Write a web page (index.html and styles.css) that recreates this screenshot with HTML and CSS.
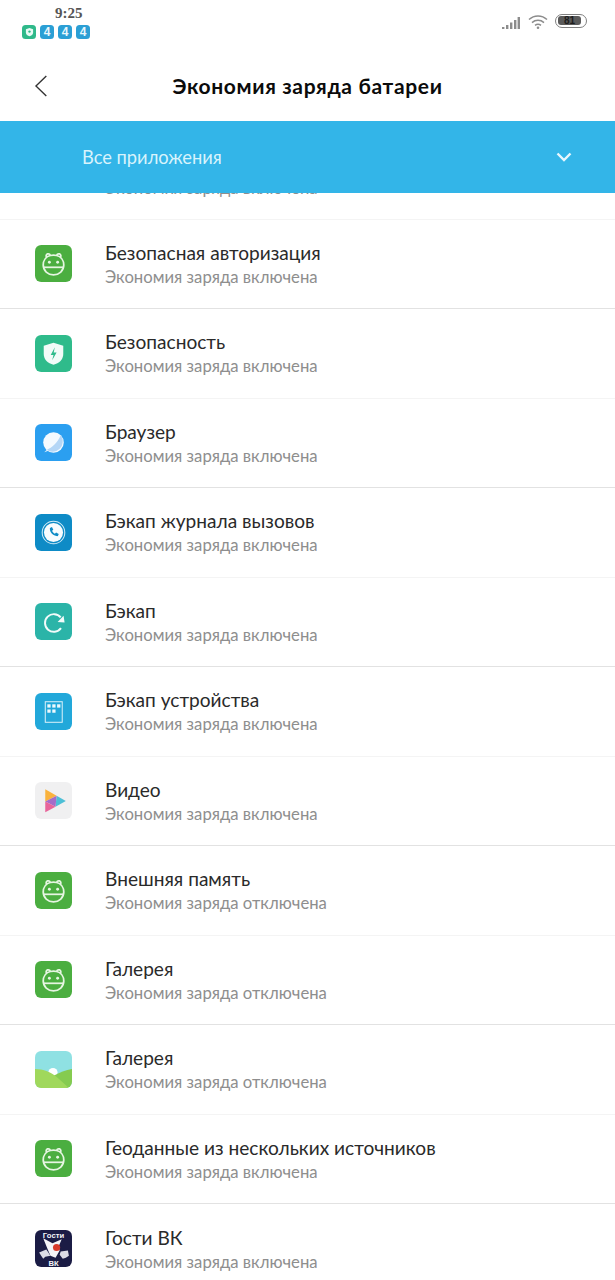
FILE: index.html
```html
<!DOCTYPE html>
<html lang="ru">
<head>
<meta charset="utf-8">
<title>Экономия заряда батареи</title>
<link rel="stylesheet" href="styles.css">
</head>
<body>
<svg class="defs" width="0" height="0" aria-hidden="true">
  <defs>
    <symbol id="android" viewBox="0 0 36 36">
      <rect width="36" height="36" rx="6" fill="#4bae40"/>
      <g fill="none" stroke="#e6f5e2" stroke-width="1.700">
        <path d="M11.500 12.500c-.9-1.200-1-3.200.7-3.800 1.200-.4 2.300.2 2.800 1.500M24.500 12.500c.9-1.200 1-3.200-.7-3.800-1.200-.4-2.300.2-2.800 1.500"/>
        <path d="M15 10.200c2-.5 4-.5 6 0 4.300 1 7 4.800 7 9.300 0 5.500-4.500 9.500-10 9.500S8 25 8 19.500c0-4.500 2.700-8.300 7-9.300z"/>
        <path d="M8.200 21.700h19.600"/>
      </g>
      <circle cx="14" cy="16.800" r="1.400" fill="#e6f5e2"/>
      <circle cx="22" cy="16.800" r="1.400" fill="#e6f5e2"/>
    </symbol>
    <symbol id="shield" viewBox="0 0 36 36">
      <rect width="36" height="36" rx="6" fill="#2fbb8b"/>
      <path d="M18 7.500l9.500 3v8c0 5.500-4 9-9.500 10.500C12.500 27.500 8.500 24 8.500 18.500v-8z" fill="#f2fbf8"/>
      <path d="M19.300 12l-4 7.500h2.700l-1.300 5 4.300-7.500h-2.800z" fill="#2fbb8b"/>
    </symbol>
    <symbol id="browser" viewBox="0 0 36 36">
      <rect width="36" height="36" rx="6" fill="#2b9ff0"/>
      <circle cx="18" cy="18" r="10" fill="#f4faff"/>
      <path d="M25 11a10 10 0 0 1-14 14c5-1 11-7 14-14z" fill="#b4d6f6"/>
      <path d="M9 27.500l3-3 1 1.500z" fill="#e4f2fd"/>
    </symbol>
    <symbol id="calls" viewBox="0 0 36 36">
      <rect width="36" height="36" rx="6" fill="#0e8bc6"/>
      <circle cx="18" cy="18" r="11" fill="none" stroke="#d5edf8" stroke-width="1"/>
      <circle cx="18" cy="18" r="9.300" fill="#f8fcfe"/>
      <path d="M14.500 13.500l2-.8 1.300 2.700-1.200 1c.6 1.400 1.500 2.300 2.800 2.900l1.100-1.200 2.600 1.400-.8 2c-4.500.4-8.300-3.500-7.800-8z" fill="#0e8bc6"/>
    </symbol>
    <symbol id="backup" viewBox="0 0 36 36">
      <rect width="36" height="36" rx="6" fill="#2bb4a8"/>
      <path d="M25.300 24.500A8.600 8.600 0 1 1 25 14" fill="none" stroke="#f2fbfa" stroke-width="1.900"/>
      <path d="M22 18.500l6.800.5-1-6.500z" fill="#f2fbfa"/>
    </symbol>
    <symbol id="device" viewBox="0 0 36 36">
      <rect width="36" height="36" rx="6" fill="#22a8da"/>
      <rect x="10" y="8.500" width="16.500" height="20" fill="none" stroke="#d8f0f9" stroke-width="1"/>
      <g fill="#eef9fd">
        <rect x="12" y="11" width="3.200" height="3.200"/>
        <rect x="16.800" y="11" width="3.200" height="3.200"/>
        <rect x="21.500" y="11" width="3.200" height="3.200"/>
        <rect x="12" y="16" width="3.200" height="3.200"/>
        <rect x="16.800" y="16" width="3.200" height="3.200"/>
      </g>
    </symbol>
    <symbol id="video" viewBox="0 0 36 36">
      <rect width="36" height="36" rx="6" fill="#f0f0f1"/>
      <path d="M10 7l11 6.300L10 19z" fill="#f9b23d"/>
      <path d="M21 13.300l9 5.200-10 5.500z" fill="#4dbfd6"/>
      <path d="M10 19l11-5.700-1 10.700z" fill="#a56cc8"/>
      <path d="M10 19l10 5-10 5.500z" fill="#e8649a"/>
    </symbol>
    <symbol id="gallery" viewBox="0 0 36 36">
      <clipPath id="gallery-clip"><rect width="36" height="36" rx="6"/></clipPath>
      <g clip-path="url(#gallery-clip)">
        <rect width="36" height="36" fill="#8fe1e3"/>
        <circle cx="17.500" cy="21" r="4.500" fill="#fff"/>
        <path d="M36 17.500c-6 1-12 3.500-18 6.500l10 12h8z" fill="#85cb50"/>
        <path d="M0 17.500c8 0 16 3 22 8.500l11 10H0z" fill="#a0d85c"/>
      </g>
    </symbol>
    <symbol id="vk" viewBox="0 0 36 36">
      <rect width="36" height="36" rx="6" fill="#1b1c45"/>
      <text x="18" y="7.500" class="vk-label">Гости</text>
      <text x="18" y="35" class="vk-label">ВК</text>
      <path d="M8 8l9 5 9-4-3 7 1 4-4 7-5-2-3-7z" fill="#f4f4f8"/>
      <path d="M4 22l7-3 2 3 2 3-5 1-2 2-2-3zM32 20l-7 1-1 3 3 4 3-1 3-2z" fill="#dcdce6"/>
      <circle cx="21" cy="17" r="3.500" fill="#d8392a"/>
    </symbol>
  </defs>
</svg>

<div class="phone">
  <header class="status">
    <div class="status-left">
      <div class="clock">9:25</div>
      <div class="chips">
        <span class="chip chip-green"><svg class="chip-shield" viewBox="0 0 10 10"><path d="M5 .5l4 1.500v3.500C9 8 7 9 5 9.800 3 9 1 8 1 5.500V2z" fill="#e8faf4"/><circle cx="5" cy="4.500" r="1.300" fill="#2fb98a"/></svg></span>
        <span class="chip chip-blue">4</span>
        <span class="chip chip-blue">4</span>
        <span class="chip chip-blue">4</span>
      </div>
    </div>
    <div class="status-right">
      <svg class="signal" viewBox="0 0 18 12"><g fill="#8c8c8c"><rect x="0" y="10" width="2.400" height="2"/><rect x="4" y="8" width="2.400" height="4"/><rect x="8" y="5.500" width="2.400" height="6.500"/><rect x="12" y="3" width="2.400" height="9"/><rect x="15.600" y="0" width="2.400" height="12"/></g></svg>
      <svg class="wifi" viewBox="0 0 20 15"><g fill="none" stroke="#8c8c8c" stroke-width="1.500"><path d="M1 5.500c5-4.800 13-4.800 18 0"/><path d="M4 8.600c3.400-3 8.600-3 12 0"/><path d="M7 11.300c1.800-1.300 4.200-1.300 6 0"/></g><circle cx="10" cy="13.700" r="1.300" fill="#8c8c8c"/></svg>
      <div class="battery"><span class="battery-fill">81</span></div>
    </div>
  </header>

  <nav class="titlebar">
    <svg class="back" viewBox="0 0 14 24"><path d="M12.800 1L1.500 12l11.300 11" fill="none" stroke="#333" stroke-width="1.500"/></svg>
    <h1 class="title">Экономия заряда батареи</h1>
  </nav>

  <div class="filter">
    <span class="filter-label">Все приложения</span>
    <svg class="filter-chevron" viewBox="0 0 16 10"><path d="M1.500 1.500L8 8l6.500-6.500" fill="none" stroke="#e8f7fd" stroke-width="2.400"/></svg>
  </div>

  <main class="list">
    <div class="row row-clipped row-faint"><span class="sub">Экономия заряда включена</span></div>
    <div class="row"><svg class="icon"><use href="#android"/></svg><div class="texts"><span class="name">Безопасная авторизация</span><span class="sub">Экономия заряда включена</span></div></div>
    <div class="row row-faint"><svg class="icon"><use href="#shield"/></svg><div class="texts"><span class="name">Безопасность</span><span class="sub">Экономия заряда включена</span></div></div>
    <div class="row"><svg class="icon"><use href="#browser"/></svg><div class="texts"><span class="name">Браузер</span><span class="sub">Экономия заряда включена</span></div></div>
    <div class="row row-faint"><svg class="icon"><use href="#calls"/></svg><div class="texts"><span class="name">Бэкап журнала вызовов</span><span class="sub">Экономия заряда включена</span></div></div>
    <div class="row"><svg class="icon"><use href="#backup"/></svg><div class="texts"><span class="name">Бэкап</span><span class="sub">Экономия заряда включена</span></div></div>
    <div class="row row-faint"><svg class="icon"><use href="#device"/></svg><div class="texts"><span class="name">Бэкап устройства</span><span class="sub">Экономия заряда включена</span></div></div>
    <div class="row"><svg class="icon"><use href="#video"/></svg><div class="texts"><span class="name">Видео</span><span class="sub">Экономия заряда включена</span></div></div>
    <div class="row row-faint"><svg class="icon"><use href="#android"/></svg><div class="texts"><span class="name">Внешняя память</span><span class="sub">Экономия заряда отключена</span></div></div>
    <div class="row"><svg class="icon"><use href="#android"/></svg><div class="texts"><span class="name">Галерея</span><span class="sub">Экономия заряда отключена</span></div></div>
    <div class="row row-faint"><svg class="icon"><use href="#gallery"/></svg><div class="texts"><span class="name">Галерея</span><span class="sub">Экономия заряда отключена</span></div></div>
    <div class="row"><svg class="icon"><use href="#android"/></svg><div class="texts"><span class="name">Геоданные из нескольких источников</span><span class="sub">Экономия заряда включена</span></div></div>
    <div class="row row-last"><svg class="icon"><use href="#vk"/></svg><div class="texts"><span class="name">Гости ВК</span><span class="sub">Экономия заряда включена</span></div></div>
  </main>
</div>
</body>
</html>
```
FILE: styles.css
```css
* { box-sizing: border-box; }

html, body {
  margin: 0;
  padding: 0;
  background: #fff;
}

body {
  font-family: "Lato", "Noto Sans", sans-serif;
  overflow: hidden;
}

.defs { position: absolute; }

.vk-label {
  font-family: "Liberation Sans", sans-serif;
  font-size: 7.5px;
  font-weight: 700;
  fill: #f4f4f8;
  text-anchor: middle;
}

.phone {
  width: 615px;
  height: 1280px;
  display: flex;
  flex-direction: column;
  overflow: hidden;
}

/* status bar */
.status {
  height: 50px;
  flex: none;
  display: flex;
  justify-content: space-between;
  padding: 6px 28px 0 22px;
}

.status-left {
  display: flex;
  flex-direction: column;
  align-items: flex-start;
}

.clock {
  margin-left: 33px;
  font-family: "Liberation Serif", serif;
  font-size: 15px;
  line-height: 15px;
  font-weight: 700;
  color: #555;
}

.chips {
  margin-top: 4px;
  display: flex;
  gap: 4px;
}

.chip {
  width: 14px;
  height: 14px;
  border-radius: 3.500px;
  display: flex;
  align-items: center;
  justify-content: center;
  font-family: "Liberation Sans", sans-serif;
  font-size: 12px;
  font-weight: 700;
  color: #e9f7fc;
}

.chip-green { background: #2fb98a; }
.chip-blue { background: #2b9fd5; }
.chip-shield { width: 9px; height: 10px; }

.status-right {
  display: flex;
  align-items: flex-start;
  padding-top: 8px;
}

.signal { width: 18px; height: 12px; margin: 3px 8px 0 0; }
.wifi { width: 20px; height: 15px; margin-right: 7px; }

.battery {
  width: 32px;
  height: 14px;
  border: 1.500px solid #808080;
  border-radius: 7px;
  padding: 1px 2px;
  display: flex;
}

.battery-fill {
  width: 23px;
  height: 9px;
  border-radius: 3px;
  background: #5a5a5a;
  color: #1d1d1d;
  font-family: "Liberation Sans", sans-serif;
  font-size: 10px;
  line-height: 9px;
  font-weight: 700;
  text-align: center;
}

/* title */
.titlebar {
  height: 71px;
  flex: none;
  padding-bottom: 1px;
  display: flex;
  align-items: center;
  justify-content: center;
  position: relative;
}

.back {
  position: absolute;
  left: 34px;
  top: 25px;
  width: 14px;
  height: 22px;
}

.title {
  margin: 0;
  font-family: "Lato", sans-serif;
  font-size: 21px;
  font-weight: 700;
  letter-spacing: 0.65px;
  color: #0b0b0b;
}

/* filter bar */
.filter {
  height: 72px;
  flex: none;
  padding: 0 43px 0 82px;
  background: #33b5e8;
  display: flex;
  align-items: center;
  justify-content: space-between;
}

.filter-label {
  font-size: 18.300px;
  color: #d8f3fc;
}

.filter-chevron { width: 16px; height: 10px; }

/* list */
.list {
  flex: 1;
  min-height: 0;
  overflow: hidden;
}

.row {
  height: 89.500px;
  padding: 0 0 0 35px;
  display: flex;
  align-items: center;
  border-bottom: 1px solid #e2e2e2;
}

.row-faint { border-bottom-color: #f4f4f4; }
.row-last { border-bottom: 0; }

.row-clipped {
  height: 26.500px;
  padding: 0 0 20px 105px;
  align-items: flex-end;
}

.icon {
  width: 37px;
  height: 37px;
  flex: none;
}

.texts {
  margin-left: 33px;
  padding-top: 1px;
  display: flex;
  flex-direction: column;
}

.texts .sub { margin-top: 1px; }

.name {
  font-size: 19.100px;
  line-height: 24px;
  color: #2a2a2a;
}

.sub {
  font-size: 16.700px;
  line-height: 22px;
  color: #8e8e8e;
}
```
